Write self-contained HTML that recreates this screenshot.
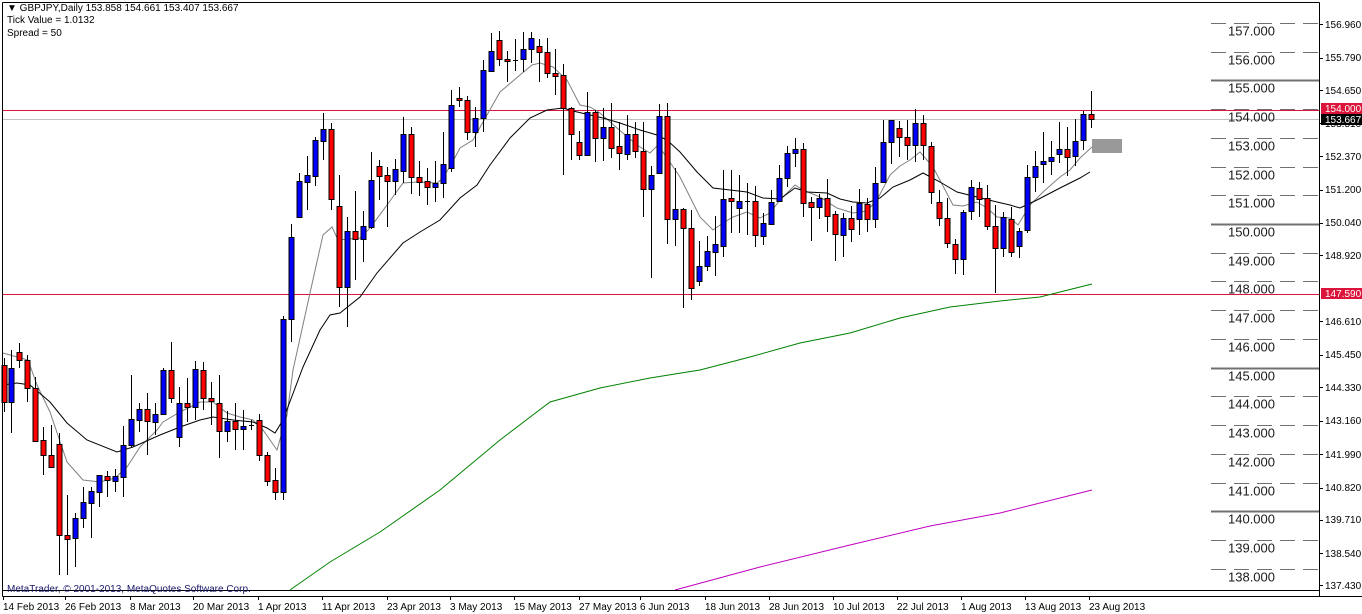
<!DOCTYPE html>
<html><head><meta charset="utf-8"><style>
html,body{margin:0;padding:0;background:#fff;width:1362px;height:614px;overflow:hidden}
svg{display:block}
text{font-family:"Liberation Sans",sans-serif}
</style></head><body>
<svg id="c" width="1362" height="614" xmlns="http://www.w3.org/2000/svg">
<rect x="0" y="0" width="1362" height="614" fill="#fff"/>
<g id="grid"></g>
<g id="lines"></g>
<g id="cand"></g>
<!-- frame -->
<line x1="2.5" y1="2.5" x2="1319.5" y2="2.5" stroke="#000"/>
<line x1="2.5" y1="2.5" x2="2.5" y2="596.5" stroke="#000"/>
<line x1="1319.5" y1="2.5" x2="1319.5" y2="596.5" stroke="#000"/>
<line x1="2.5" y1="590.5" x2="1319.5" y2="590.5" stroke="#000"/>
<line x1="2.5" y1="596.5" x2="1362" y2="596.5" stroke="#000"/>
<text x="7" y="11" font-size="10" fill="#000">▼ GBPJPY,Daily  153.858 154.661 153.407 153.667</text>
<text x="7" y="23" font-size="10" fill="#000">Tick Value = 1.0132</text>
<text x="7" y="36" font-size="10" fill="#000">Spread = 50</text>
<text x="7" y="592" font-size="10" fill="#1a1a6a">MetaTrader, © 2001-2013, MetaQuotes Software Corp.</text>
<g font-size="10" fill="#000">
<text x="3" y="610">14 Feb 2013</text><text x="65" y="610">26 Feb 2013</text><text x="130" y="610">8 Mar 2013</text><text x="193" y="610">20 Mar 2013</text><text x="258" y="610">1 Apr 2013</text><text x="322" y="610">11 Apr 2013</text><text x="387" y="610">23 Apr 2013</text><text x="450" y="610">3 May 2013</text><text x="514" y="610">15 May 2013</text><text x="579" y="610">27 May 2013</text><text x="640" y="610">6 Jun 2013</text><text x="705" y="610">18 Jun 2013</text><text x="769" y="610">28 Jun 2013</text><text x="833" y="610">10 Jul 2013</text><text x="897" y="610">22 Jul 2013</text><text x="961" y="610">1 Aug 2013</text><text x="1025" y="610">13 Aug 2013</text><text x="1089" y="610">23 Aug 2013</text>
</g>
<g font-size="10" fill="#000">
<text x="1325" y="28">156.960</text><text x="1325" y="61">155.790</text><text x="1325" y="94">154.650</text><text x="1325" y="127">153.510</text><text x="1325" y="160">152.370</text><text x="1325" y="193">151.200</text><text x="1325" y="226">150.040</text><text x="1325" y="259">148.920</text><text x="1325" y="325">146.610</text><text x="1325" y="358">145.450</text><text x="1325" y="391">144.330</text><text x="1325" y="424">143.160</text><text x="1325" y="458">141.990</text><text x="1325" y="491">140.820</text><text x="1325" y="523">139.710</text><text x="1325" y="557">138.540</text><text x="1325" y="589">137.430</text>
</g>
<g font-size="13" fill="#1a1a1a" id="big"></g>
<rect x="1321" y="103" width="41" height="11" fill="#dc143c"/>
<text x="1325" y="112" font-size="10" fill="#fff">154.000</text>
<rect x="1321" y="114" width="41" height="11" fill="#000"/>
<text x="1325" y="123" font-size="10" fill="#fff">153.667</text>
<rect x="1321" y="288" width="41" height="11" fill="#dc143c"/>
<text x="1325" y="297" font-size="10" fill="#fff">147.590</text>
</svg>
<script>
var NS="http://www.w3.org/2000/svg";
function el(p,t,a){var e=document.createElementNS(NS,t);for(var k in a)e.setAttribute(k,a[k]);p.appendChild(e);return e;}
var grid=document.getElementById('grid'),lines=document.getElementById('lines'),cand=document.getElementById('cand'),big=document.getElementById('big');
function py(p){return 24+(156.96-p)*28.73;}
for(var p=138;p<=157;p++){var y=Math.round(py(p))+0.5;var solid=(p%5==0);
 if(solid) el(grid,'line',{x1:1211,y1:y,x2:1319,y2:y,stroke:'#707070','stroke-width':2});
 else el(grid,'line',{x1:1211,y1:y,x2:1319,y2:y,stroke:'#707070','stroke-width':1,'stroke-dasharray':'15 8'});
 var t=el(big,'text',{x:1228,y:y+12});t.textContent=p+'.000';}
var tks=[24,57.6,90.4,123,155.9,189.5,222.8,255,321,354.7,386.9,420.5,454,487.6,519.5,553,585];
tks.forEach(function(y){el(grid,'line',{x1:1319,y1:Math.round(y)+.5,x2:1323,y2:Math.round(y)+.5,stroke:'#000'});});
[3,65,130,193,258,322,387,450,514,579,640,705,769,833,897,961,1025,1089].forEach(function(x){el(grid,'line',{x1:x+.5,y1:596,x2:x+.5,y2:600,stroke:'#000'});});
el(lines,'line',{x1:3,y1:110.5,x2:1319,y2:110.5,stroke:'#dc143c'});
el(lines,'line',{x1:3,y1:119.5,x2:1319,y2:119.5,stroke:'#c0c0c0'});
el(lines,'line',{x1:3,y1:294.5,x2:1319,y2:294.5,stroke:'#dc143c'});
el(lines,'rect',{x:1092,y:139,width:30,height:14,fill:'#999'});
function pl(pts,col,w){el(lines,'polyline',{points:pts,fill:'none',stroke:col,'stroke-width':w||1});}
pl("290,590 330,562 380,532 440,490 500,440 550,402 600,388 650,378 700,370 750,357 800,343 850,333 900,318 950,307 1000,301 1040,297 1092,284",'#008000');
pl("675,590 760,567 850,545 930,526 1000,513 1092,490",'#c000c0');
pl("3,353 17,357 28,360 37,385 50,412 67,462 83,480 100,482 115,478 127,467 140,447 157,430 163,422 180,412 200,402 213,402 227,413 240,417 253,420 263,430 277,450 287,415 293,370 310,293 323,235 332,227 338,240 360,238 370,228 387,205 403,183 417,182 437,183 443,178 452,163 460,148 473,140 483,122 500,92 520,75 532,65 540,63 553,67 567,80 580,105 590,107 600,113 617,128 637,145 650,153 658,145 667,158 680,177 690,197 700,217 713,230 723,223 733,217 747,212 760,218 770,213 780,200 795,185 803,190 820,197 837,208 853,213 867,211 877,200 890,175 900,166 910,160 920,152 933,167 953,205 963,206 977,202 987,208 997,217 1010,218 1018,225 1030,205 1043,192 1060,177 1070,170 1080,158 1092,147",'#808080');
pl("3,385 17,383 30,385 50,402 67,423 87,440 117,452 133,447 160,435 180,427 200,420 213,417 233,420 253,422 267,428 275,433 283,420 303,367 320,330 330,315 340,313 360,297 377,273 403,243 420,232 440,220 460,198 477,185 490,165 510,138 530,118 547,110 563,108 573,111 603,118 620,123 640,130 657,135 667,140 680,152 697,172 713,188 730,190 747,192 763,198 780,199 795,188 807,192 827,193 840,199 853,202 867,203 880,198 893,187 910,180 923,173 940,182 957,192 977,197 997,202 1010,205 1020,208 1037,200 1060,188 1080,178 1090,172",'#000');
var d=[
[4,365,402,358,412],[11,402,368,350,433],[19,352,360,343,368],[27,360,388,355,402],[35,388,441,377,442],[43,440,455,427,475],[51,455,467,425,468],[59,444,535,433,575],[67,535,539,495,575],[75,538,518,513,567],[83,518,502,487,528],[91,503,491,487,538],[99,492,475,475,507],[107,476,480,471,497],[115,481,476,469,492],[123,477,445,426,497],[131,445,419,375,448],[139,420,409,403,432],[147,409,421,393,455],[155,422,414,403,435],[163,414,370,368,415],[171,370,398,342,403],[179,437,403,387,447],[187,403,407,378,422],[195,407,369,361,420],[203,370,398,362,410],[211,398,401,382,425],[219,403,431,375,458],[227,431,421,411,442],[235,421,429,403,450],[243,429,426,410,450],[251,425,425,420,430],[259,420,455,414,461],[267,455,481,452,486],[275,480,492,468,500],[283,492,319,316,500],
[291,319,237,224,342],[299,217,181,173,218],[307,182,175,156,210],[315,176,140,137,186],[323,141,129,113,160],[331,129,199,123,210],[339,206,287,175,307],[347,287,231,217,327],[355,231,239,191,280],[363,239,226,211,262],[371,227,180,152,229],[379,166,176,160,200],[387,175,181,167,227],[395,181,169,159,195],[403,171,134,117,183],[411,134,177,127,194],[419,177,182,161,196],[427,181,187,168,205],[435,187,183,161,202],[443,183,164,132,198],[451,168,105,90,172],
[459,98,100,87,107],[467,100,132,96,140],[475,132,118,107,147],[483,118,70,60,132],[491,71,51,33,72],[499,40,59,31,66],[507,59,61,51,82],[515,60,60,39,71],[523,59,49,32,72],[531,49,38,32,63],[539,46,52,39,82],[547,52,73,38,78],[555,73,76,49,95],[563,75,108,64,175],[571,108,134,107,160],[579,142,155,131,160],[587,155,112,92,156],[595,112,138,110,162],[603,138,127,108,161],[611,127,148,103,158],[619,146,153,122,170],[627,154,134,115,160],[635,134,151,122,158],[643,151,189,122,217],[651,189,175,166,278],[659,173,116,104,173],[667,116,219,103,244],[675,219,209,168,246],[683,209,228,208,308],[691,228,288,210,300],
[699,281,266,241,286],[707,266,251,236,271],[715,252,244,216,276],[723,246,199,170,257],[731,198,201,170,233],[739,208,201,175,233],[747,201,201,183,235],[755,201,235,186,247],[763,236,223,213,245],[771,224,202,190,225],[779,201,178,165,202],[787,178,153,146,187],[795,153,149,138,167],[803,149,203,143,217],[811,202,207,197,241],[819,207,198,194,219],[827,198,216,179,232],[835,214,234,211,261],[843,235,218,213,257],[851,218,229,206,242],[859,219,203,189,235],[867,204,219,198,232],[875,219,183,167,228],[883,182,142,120,183],[891,142,120,120,164],[899,128,137,121,157],[907,137,145,120,160],
[915,145,123,109,162],[923,123,145,115,160],[931,146,192,142,204],[939,202,218,190,226],[947,218,243,198,248],[955,244,259,239,274],[963,259,212,210,275],[971,211,187,180,220],[979,188,199,182,217],[987,198,226,185,230],[995,226,248,205,293],[1003,248,217,212,257],[1011,219,252,207,257],[1019,246,231,228,258],[1027,230,177,165,233],[1035,177,166,151,192],[1043,164,161,132,183],[1051,161,157,141,175],[1059,154,149,122,163],[1067,149,157,127,176],[1075,156,141,119,166],[1083,140,114,111,150],[1091,114,119,91,128]
];
d.forEach(function(c){var x=c[0],o=c[1],cl=c[2],h=c[3],l=c[4];
 el(cand,'line',{x1:x+.5,y1:h,x2:x+.5,y2:l,stroke:'#000','stroke-width':1});
 var top=Math.min(o,cl),bot=Math.max(o,cl);
 if(bot-top<1){el(cand,'line',{x1:x-2,y1:top+.5,x2:x+3,y2:top+.5,stroke:'#000'});return;}
 el(cand,'rect',{x:x-2,y:top+.5,width:5,height:bot-top,fill:(cl<o?'#0000ff':'#ff0000'),stroke:'#000','stroke-width':1});
});
</script>
</body></html>
